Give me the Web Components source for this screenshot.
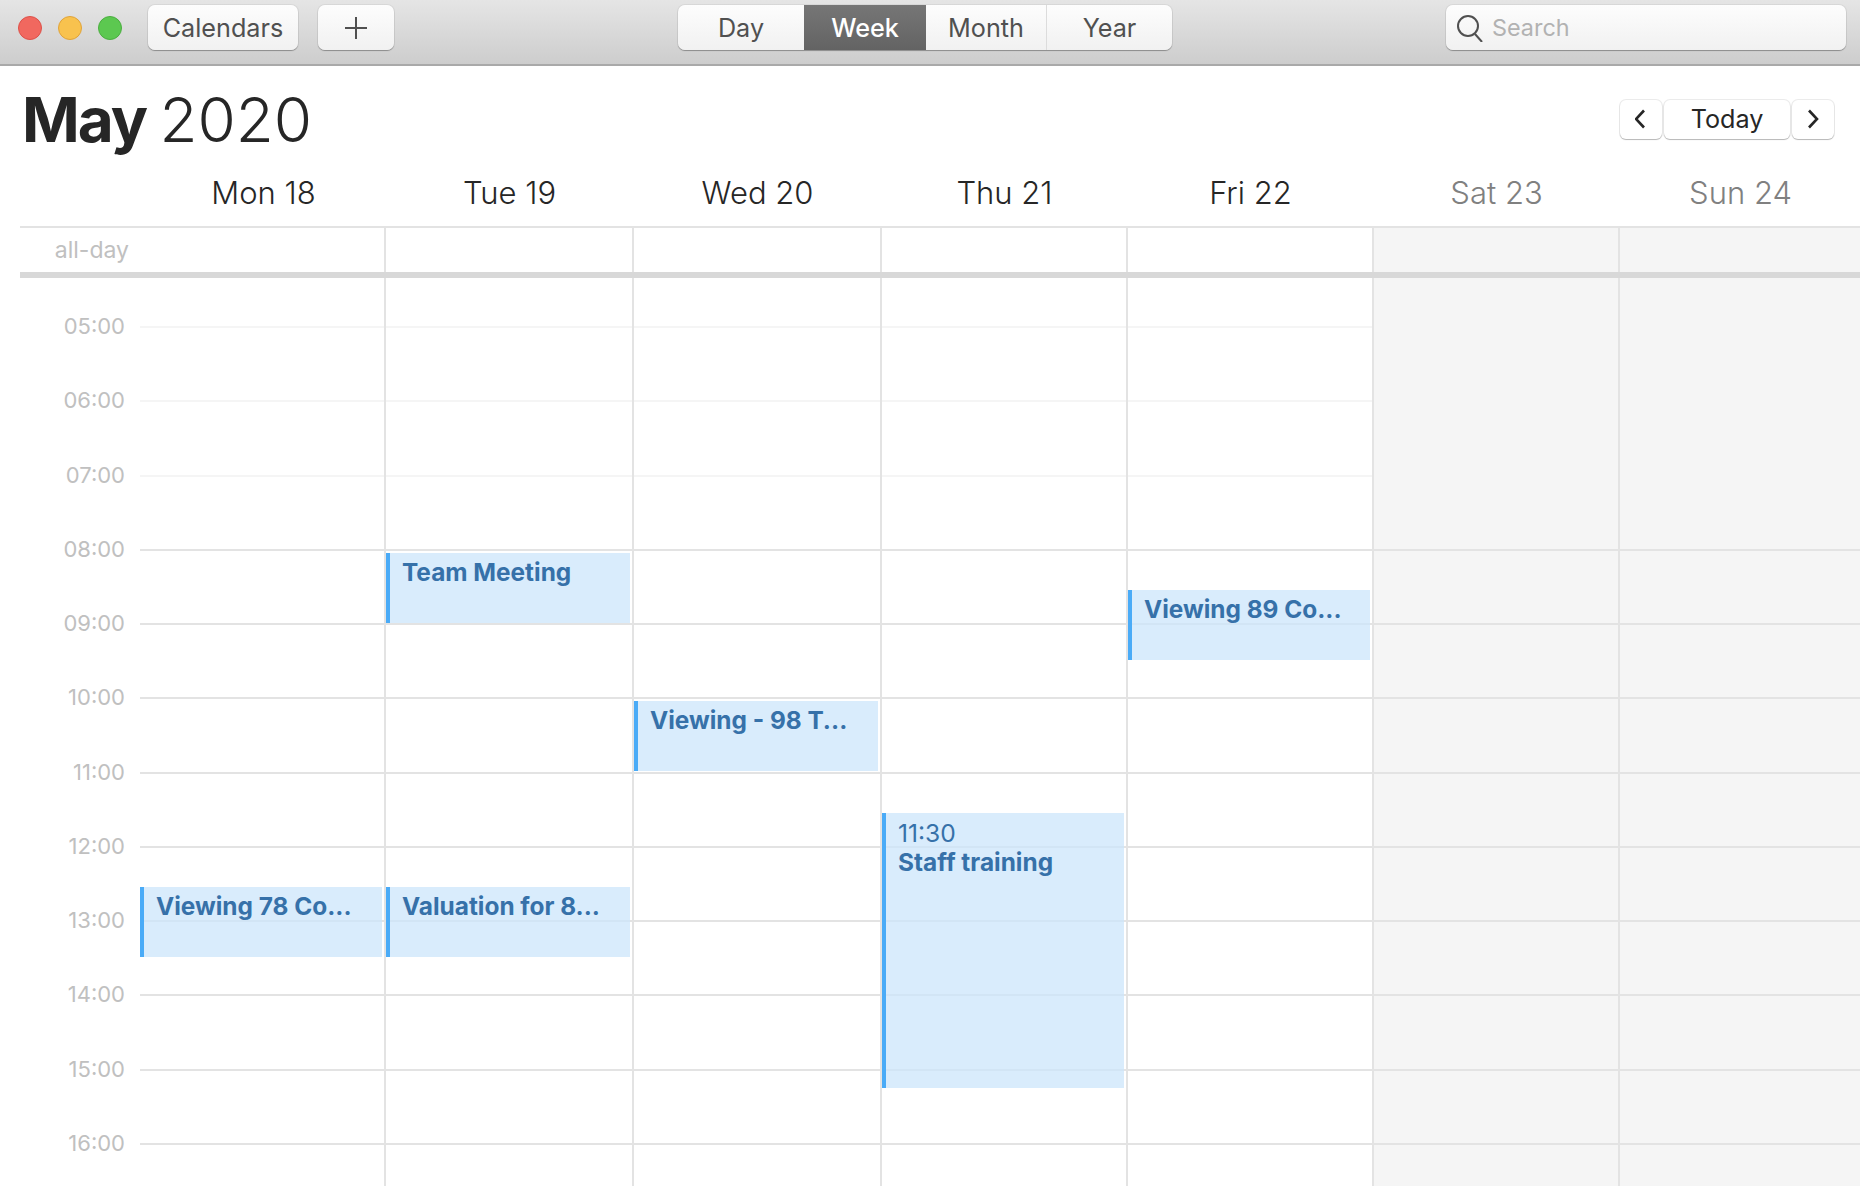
<!DOCTYPE html>
<html lang="en">
<head>
<meta charset="utf-8">
<title>Calendar</title>
<style>
    html, body { margin: 0; height: 100%; background: #fff; }
    body { font-family: Inter, "Liberation Sans", sans-serif; overflow: hidden; }
</style>
</head>
<body>
<calendar-app>
    <mac-toolbar></mac-toolbar>
    <month-header><b>May</b> 2020</month-header>
    <week-header></week-header>
    <all-day-row></all-day-row>
    <time-grid>
        <day-column first>
            <cal-event start="12:30" end="13:30">Viewing 78 Co...</cal-event>
        </day-column>
        <day-column>
            <cal-event start="08:00" end="09:00">Team Meeting</cal-event>
            <cal-event start="12:30" end="13:30">Valuation for 8...</cal-event>
        </day-column>
        <day-column>
            <cal-event start="10:00" end="11:00" style="margin-bottom: 1px">Viewing - 98 T...</cal-event>
        </day-column>
        <day-column>
            <cal-event start="11:30" end="15:15" time="11:30" style="margin-bottom: -1px">Staff training</cal-event>
        </day-column>
        <day-column>
            <cal-event start="08:30" end="09:30">Viewing 89 Co...</cal-event>
        </day-column>
        <day-column></day-column>
        <day-column></day-column>
    </time-grid>
</calendar-app>

<script>
class CalendarApp extends HTMLElement {
    constructor() {
        super();
        this.attachShadow({ mode: 'open' });
    }

    connectedCallback() {
        this.shadowRoot.innerHTML = `
            <style>
                :host {
                    display: flex;
                    flex-direction: column;
                    height: 1186px;
                    overflow: hidden;
                    --week-cols: 120px 244px 248px 248px 246px 246px 246px 1fr;
                    --line: #e3e3e3;
                }
            </style>
            <slot></slot>
        `;
    }
}

class ToolButton extends HTMLElement {
    constructor() {
        super();
        this.attachShadow({ mode: 'open' });
    }

    connectedCallback() {
        this.shadowRoot.innerHTML = `
            <style>
                :host {
                    display: flex;
                    align-items: center;
                    justify-content: center;
                    box-sizing: border-box;
                    height: 45px;
                    background: linear-gradient(#fdfdfd, #f1f1f1);
                    border-radius: 7px;
                    box-shadow: 0 0 0 1px rgba(0, 0, 0, 0.05), 0 1px 1px rgba(0, 0, 0, 0.3);
                    color: #505050;
                    font-size: 25.2px;
                }
            </style>
            <slot></slot>
        `;
    }
}

class SegmentedControl extends HTMLElement {
    constructor() {
        super();
        this.attachShadow({ mode: 'open' });
    }

    connectedCallback() {
        this.shadowRoot.innerHTML = `
            <style>
                :host {
                    display: flex;
                    height: 45px;
                    background: linear-gradient(#fdfdfd, #f1f1f1);
                    border-radius: 7px;
                    box-shadow: 0 0 0 1px rgba(0, 0, 0, 0.05), 0 1px 1px rgba(0, 0, 0, 0.3);
                    color: #505050;
                    font-size: 25.2px;
                    overflow: hidden;
                }
                div {
                    display: flex;
                    align-items: center;
                    justify-content: center;
                }
                .day { width: 126px; }
                .week { width: 122px; background: linear-gradient(#767676, #636363); color: #fff; font-weight: 500; }
                .month { width: 121px; border-right: 1px solid #dcdcdc; box-sizing: border-box; }
                .year { width: 125px; }
            </style>
            <div class="day">Day</div>
            <div class="week">Week</div>
            <div class="month">Month</div>
            <div class="year">Year</div>
        `;
    }
}

class SearchField extends HTMLElement {
    constructor() {
        super();
        this.attachShadow({ mode: 'open' });
    }

    connectedCallback() {
        this.shadowRoot.innerHTML = `
            <style>
                :host {
                    display: flex;
                    align-items: center;
                    gap: 9px;
                    box-sizing: border-box;
                    width: 400px;
                    height: 45px;
                    padding-left: 11px;
                    background: linear-gradient(#fdfdfd, #f1f1f1);
                    border-radius: 7px;
                    box-shadow: 0 0 0 1px rgba(0, 0, 0, 0.05), 0 1px 1px rgba(0, 0, 0, 0.3);
                    color: #b2b2b2;
                    font-size: 23.4px;
                }
                svg { flex: none; }
            </style>
            <svg width="26" height="28" viewBox="0 0 26 28" fill="none" stroke="#505050" stroke-width="2">
                <circle cx="11" cy="12" r="10"/>
                <path d="M18 20 L25 28"/>
            </svg>
            <span>Search</span>
        `;
    }
}

class MacToolbar extends HTMLElement {
    constructor() {
        super();
        this.attachShadow({ mode: 'open' });
    }

    connectedCallback() {
        this.shadowRoot.innerHTML = `
            <style>
                :host {
                    display: flex;
                    align-items: center;
                    flex: none;
                    box-sizing: border-box;
                    height: 66px;
                    padding: 0 14px 9px 18px;
                    background: linear-gradient(#e5e5e5, #cdcdcd);
                    border-bottom: 2px solid #a9a9a9;
                }
                .lights { display: flex; gap: 16px; margin-right: 26px; }
                .light { width: 24px; height: 24px; border-radius: 50%; box-sizing: border-box; }
                .close { background: #f1685f; border: 1px solid #dd5149; }
                .min { background: #f8c24e; border: 1px solid #e0a33a; }
                .max { background: #5cc850; border: 1px solid #4bae40; }
                .calendars { width: 150px; margin-right: 20px; }
                .add { width: 76px; }
                segmented-control { margin-left: 284px; }
                search-field { margin-left: auto; }
            </style>
            <div class="lights">
                <div class="light close"></div>
                <div class="light min"></div>
                <div class="light max"></div>
            </div>
            <tool-button class="calendars">Calendars</tool-button>
            <tool-button class="add">
                <svg width="22" height="22" viewBox="0 0 22 22" stroke="#505050" stroke-width="2">
                    <path d="M11 0 V22 M0 11 H22"/>
                </svg>
            </tool-button>
            <segmented-control></segmented-control>
            <search-field></search-field>
        `;
    }
}

class WeekNav extends HTMLElement {
    constructor() {
        super();
        this.attachShadow({ mode: 'open' });
    }

    connectedCallback() {
        this.shadowRoot.innerHTML = `
            <style>
                :host { display: flex; gap: 2px; }
                button {
                    display: flex;
                    align-items: center;
                    justify-content: center;
                    height: 39px;
                    padding: 0;
                    background: #fff;
                    border: none;
                    border-radius: 6px;
                    box-shadow: 0 0 0 1px rgba(0, 0, 0, 0.08), 0 1px 1px rgba(0, 0, 0, 0.22);
                    color: #262626;
                    font: 400 25.2px Inter, "Liberation Sans", sans-serif;
                }
                .arrow { width: 42px; }
                .today { width: 126px; }
            </style>
            <button class="arrow" aria-label="Previous">
                <svg width="12" height="20" viewBox="0 0 12 20" fill="none" stroke="#262626" stroke-width="2.6">
                    <path d="M9 1.5 L1 10 L9 18.5"/>
                </svg>
            </button>
            <button class="today">Today</button>
            <button class="arrow" aria-label="Next">
                <svg width="12" height="20" viewBox="0 0 12 20" fill="none" stroke="#262626" stroke-width="2.6">
                    <path d="M2 1.5 L10 10 L2 18.5"/>
                </svg>
            </button>
        `;
    }
}

class MonthHeader extends HTMLElement {
    constructor() {
        super();
        this.attachShadow({ mode: 'open' });
    }

    connectedCallback() {
        this.shadowRoot.innerHTML = `
            <style>
                :host {
                    display: flex;
                    align-items: center;
                    justify-content: space-between;
                    flex: none;
                    height: 106px;
                    padding: 0 26px 0 22px;
                    color: #262626;
                }
                h1 { margin: 0; font-size: 62px; font-weight: 300; word-spacing: -4px; }
                ::slotted(b) { font-weight: 700; letter-spacing: -2px; }
            </style>
            <h1><slot></slot></h1>
            <week-nav></week-nav>
        `;
    }
}

class WeekHeader extends HTMLElement {
    constructor() {
        super();
        this.attachShadow({ mode: 'open' });
    }

    connectedCallback() {
        const days = ['Mon 18', 'Tue 19', 'Wed 20', 'Thu 21', 'Fri 22', 'Sat 23', 'Sun 24'];
        const cells = days.map((d, i) => `<div class="${i > 4 ? 'off' : ''}">${d}</div>`).join('');
        this.shadowRoot.innerHTML = `
            <style>
                :host {
                    display: grid;
                    grid-template-columns: var(--week-cols);
                    flex: none;
                    box-sizing: border-box;
                    height: 56px;
                    margin-left: 20px;
                    padding-bottom: 14px;
                    border-bottom: 2px solid var(--line);
                    color: #262626;
                    font-size: 31px;
                    font-weight: 300;
                }
                div { display: flex; align-items: center; justify-content: center; padding-left: 3px; }
                .off { color: #808080; }
            </style>
            <span></span>
            ${cells}
        `;
    }
}

class AllDayRow extends HTMLElement {
    constructor() {
        super();
        this.attachShadow({ mode: 'open' });
    }

    connectedCallback() {
        this.shadowRoot.innerHTML = `
            <style>
                :host {
                    display: grid;
                    grid-template-columns: var(--week-cols);
                    flex: none;
                    box-sizing: border-box;
                    height: 50px;
                    margin-left: 20px;
                    border-bottom: 6px solid #d8d8d8;
                }
                .label {
                    display: flex;
                    align-items: center;
                    justify-content: flex-end;
                    padding-right: 11px;
                    color: #c0c0c0;
                    font-size: 23px;
                }
                .cell { border-left: 2px solid var(--line); }
                .off { background: #f5f5f5; }
            </style>
            <div class="label">all-day</div>
            <div></div>
            <div class="cell"></div>
            <div class="cell"></div>
            <div class="cell"></div>
            <div class="cell"></div>
            <div class="cell off"></div>
            <div class="cell off"></div>
        `;
    }
}

class HourRow extends HTMLElement {
    constructor() {
        super();
        this.attachShadow({ mode: 'open' });
    }

    connectedCallback() {
        this.shadowRoot.innerHTML = `
            <style>
                :host {
                    display: flex;
                    box-sizing: border-box;
                    height: 74.25px;
                    padding-left: 20px;
                }
                .label {
                    flex: none;
                    box-sizing: border-box;
                    width: 120px;
                    padding-right: 15px;
                    color: #c0c0c0;
                    font-size: 22px;
                    line-height: 0;
                    text-align: right;
                }
                .line { flex: 1; height: 2px; background: var(--line); }
                :host([dim]) .line { background: #f5f5f5; }
            </style>
            <div class="label"><slot></slot></div>
            <div class="line"></div>
        `;
    }
}

class TimeGrid extends HTMLElement {
    constructor() {
        super();
        this.attachShadow({ mode: 'open' });
    }

    connectedCallback() {
        let rows = '';
        for (let h = 5; h <= 16; h++) {
            const label = String(h).padStart(2, '0') + ':00';
            rows += `<hour-row ${h < 8 ? 'dim' : ''}>${label}</hour-row>`;
        }
        this.shadowRoot.innerHTML = `
            <style>
                :host {
                    display: grid;
                    grid-template-columns: 1fr;
                    flex: 1;
                    min-height: 0;
                    overflow: hidden;
                    background: linear-gradient(to right, transparent 1372px, #f5f5f5 1372px);
                }
                .rows, .days { grid-area: 1 / 1; }
                .rows { padding-top: 48px; }
                .days {
                    display: grid;
                    grid-template-columns: var(--week-cols);
                    padding-left: 20px;
                }
                .days::before { content: ""; }
            </style>
            <div class="rows">${rows}</div>
            <div class="days"><slot></slot></div>
        `;
    }
}

class DayColumn extends HTMLElement {
    constructor() {
        super();
        this.attachShadow({ mode: 'open' });
    }

    connectedCallback() {
        this.shadowRoot.innerHTML = `
            <style>
                :host {
                    display: grid;
                    grid-auto-rows: 18.5625px;
                    align-content: start;
                    box-sizing: border-box;
                    padding-top: 48px;
                    border-left: 2px solid var(--line);
                }
                :host([first]) { border-left: none; }
            </style>
            <slot></slot>
        `;
    }
}

class CalEvent extends HTMLElement {
    constructor() {
        super();
        this.attachShadow({ mode: 'open' });
    }

    // quarter-hour tracks, counted from 05:00
    track(time) {
        const [h, m] = time.split(':').map(Number);
        return (h - 5) * 4 + m / 15 + 1;
    }

    connectedCallback() {
        const from = this.track(this.getAttribute('start'));
        const to = this.track(this.getAttribute('end'));
        this.style.gridRow = `${from} / ${to}`;
        const time = this.getAttribute('time');
        this.shadowRoot.innerHTML = `
            <style>
                :host {
                    display: block;
                    grid-column: 1;
                    box-sizing: border-box;
                    margin: 4px 2px 0 0;
                    padding: 5px 8px 0 12px;
                    background: rgba(204, 229, 251, 0.75);
                    border-left: 4px solid #4aabf7;
                    color: #3671a9;
                    font-size: 24.4px;
                    line-height: 30px;
                    overflow: hidden;
                    white-space: nowrap;
                }
                .time { font-size: 24.6px; }
                .title { font-weight: 700; margin-top: -1px; }
            </style>
            ${time ? `<div class="time">${time}</div>` : ''}
            <div class="title"><slot></slot></div>
        `;
    }
}

customElements.define('calendar-app', CalendarApp);
customElements.define('tool-button', ToolButton);
customElements.define('segmented-control', SegmentedControl);
customElements.define('search-field', SearchField);
customElements.define('mac-toolbar', MacToolbar);
customElements.define('week-nav', WeekNav);
customElements.define('month-header', MonthHeader);
customElements.define('week-header', WeekHeader);
customElements.define('all-day-row', AllDayRow);
customElements.define('hour-row', HourRow);
customElements.define('time-grid', TimeGrid);
customElements.define('day-column', DayColumn);
customElements.define('cal-event', CalEvent);
</script>
</body>
</html>
